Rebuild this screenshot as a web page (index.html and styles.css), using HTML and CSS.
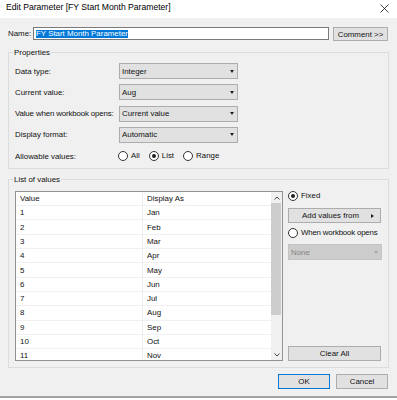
FILE: index.html
```html
<!DOCTYPE html>
<html lang="en">
<head>
  <meta charset="UTF-8">
  <title>Edit Parameter</title>
  <link rel="stylesheet" href="styles.css">
</head>
<body>
  <div class="dialog">
    <div class="titlebar">
      <span class="title">Edit Parameter [FY Start Month Parameter]</span>
      <svg class="close" viewBox="0 0 9 9"><path d="M0.5 0.5L8.5 8.5M8.5 0.5L0.5 8.5" stroke="#111" stroke-width="0.8" fill="none"/></svg>
    </div>

    <div class="namerow">
      <label class="namelabel">Name:</label>
      <div class="textbox"><span class="sel">FY Start Month Parameter</span></div>
      <button class="btn comment">Comment &gt;&gt;</button>
    </div>

    <fieldset class="group">
      <legend>Properties</legend>
      <div class="propgrid">
        <span class="plabel">Data type:</span>
        <div class="combo"><span>Integer</span><i class="arrow"></i></div>
        <span class="plabel">Current value:</span>
        <div class="combo"><span>Aug</span><i class="arrow"></i></div>
        <span class="plabel tight">Value when workbook opens:</span>
        <div class="combo"><span>Current value</span><i class="arrow"></i></div>
        <span class="plabel">Display format:</span>
        <div class="combo"><span>Automatic</span><i class="arrow"></i></div>
        <span class="plabel">Allowable values:</span>
        <div class="radios">
          <span class="opt"><i class="radio"></i>All</span>
          <span class="opt"><i class="radio on"></i>List</span>
          <span class="opt"><i class="radio"></i>Range</span>
        </div>
      </div>
    </fieldset>

    <fieldset class="group values">
      <legend>List of values</legend>
      <div class="valuesbody">
        <div class="list">
          <div class="rows">
            <div class="row"><span>Value</span><span>Display As</span></div>
            <div class="row"><span>1</span><span>Jan</span></div>
            <div class="row"><span>2</span><span>Feb</span></div>
            <div class="row"><span>3</span><span>Mar</span></div>
            <div class="row"><span>4</span><span>Apr</span></div>
            <div class="row"><span>5</span><span>May</span></div>
            <div class="row"><span>6</span><span>Jun</span></div>
            <div class="row"><span>7</span><span>Jul</span></div>
            <div class="row"><span>8</span><span>Aug</span></div>
            <div class="row"><span>9</span><span>Sep</span></div>
            <div class="row"><span>10</span><span>Oct</span></div>
            <div class="row"><span>11</span><span>Nov</span></div>
          </div>
          <div class="scrollbar">
            <div class="sbbtn"><svg viewBox="0 0 6 4"><path d="M0.5 3.5L3 1L5.5 3.5" stroke="#333" stroke-width="0.9" fill="none"/></svg></div>
            <div class="thumb"></div>
            <div class="track"></div>
            <div class="sbbtn"><svg viewBox="0 0 6 4"><path d="M0.5 0.5L3 3L5.5 0.5" stroke="#333" stroke-width="0.9" fill="none"/></svg></div>
          </div>
        </div>
        <div class="side">
          <span class="opt"><i class="radio on"></i>Fixed</span>
          <button class="btn addvalues"><span>Add values from</span><i class="rarrow"></i></button>
          <span class="opt when"><i class="radio"></i>When workbook opens</span>
          <div class="combo disabled"><span>None</span><i class="arrow"></i></div>
          <button class="btn clear">Clear All</button>
        </div>
      </div>
    </fieldset>

    <div class="footer">
      <button class="btn ok">OK</button>
      <button class="btn">Cancel</button>
    </div>
  </div>
</body>
</html>
```

FILE: styles.css
```css
body{
  margin:0;
  background:#fff;
  font-family:"Liberation Sans", Arial, sans-serif;
  font-size:7.9px;
  color:#111;
}
.dialog{
  width:397px;
  height:398px;
  box-sizing:border-box;
  background:#f0f0f0;
  border-bottom:2px solid #a3a3a3;
  overflow:hidden;
}
/* 标题栏 */
.titlebar{
  height:18px;
  background:#fff;
  display:flex;
  align-items:flex-start;
  justify-content:space-between;
  padding:0 8px 0 6px;
  box-sizing:border-box;
}
.title{
  font-size:8.6px;
  line-height:10px;
  margin-top:2px;
  color:#000;
}
.close{
  width:9px;
  height:9px;
  margin-top:3.5px;
}
/* 名称 */
.namerow{
  display:flex;
  align-items:flex-start;
  margin-top:9px;
  padding:0 8px;
  height:14px;
}
.namelabel{
  width:25px;
  line-height:13px;
}
.textbox{
  width:296px;
  height:13px;
  box-sizing:border-box;
  border:1px solid #7a7a7a;
  background:#fff;
  padding-left:2px;
  display:flex;
  align-items:center;
}
.sel{
  background:#0078d7;
  color:#fff;
  line-height:8px;
  margin-top:1px;
}
.btn{
  font-family:"Liberation Sans", Arial, sans-serif;
  font-size:7.9px;
  color:#111;
  background:#e1e1e1;
  border:1px solid #adadad;
  padding:0;
  margin:0;
  height:15px;
  box-sizing:border-box;
}
.comment{
  width:55px;
  height:14px;
  margin-left:4px;
}
/* 分组框 */
.group{
  margin:6px 8px 0;
  padding:5px 6px 4px;
  border:1px solid #dcdcdc;
  min-width:0;
}
.group legend{
  line-height:11px;
  padding:0 1px;
  margin-left:-2px;
}
.values{
  margin-top:5px;
  padding:6px 7px 6px 6px;
}
.propgrid{
  display:grid;
  grid-template-columns:104px 119px;
  grid-auto-rows:16px;
  row-gap:5.3px;
  align-items:center;
}
.tight{
  letter-spacing:-0.15px;
}
.combo{
  height:16px;
  box-sizing:border-box;
  background:#e1e1e1;
  border:1px solid #adadad;
  display:flex;
  align-items:center;
  justify-content:space-between;
  padding:0 3px 0 2px;
}
.arrow{
  width:0;
  height:0;
  border-left:2.5px solid transparent;
  border-right:2.5px solid transparent;
  border-top:3px solid #222;
}
.radios{
  display:flex;
  gap:9px;
  margin-left:-1px;
}
.opt{
  display:inline-flex;
  align-items:center;
  line-height:10px;
  white-space:nowrap;
}
.radio{
  flex:none;
  width:10px;
  height:10px;
  box-sizing:border-box;
  border:1px solid #333;
  border-radius:50%;
  background:#fff;
  margin-right:3px;
  display:inline-flex;
  align-items:center;
  justify-content:center;
}
.radio.on::after{
  content:"";
  width:4px;
  height:4px;
  border-radius:50%;
  background:#222;
}
/* 列表 */
.valuesbody{
  display:flex;
  gap:5px;
  height:170px;
}
.list{
  width:268px;
  height:170px;
  box-sizing:border-box;
  border:1px solid #929292;
  display:flex;
}
.rows{
  flex:1;
  overflow:hidden;
  background:#fff;
}
.row{
  display:flex;
  height:14.3px;
  box-sizing:border-box;
  border-bottom:1px solid #f0f0f0;
}
.row:first-child{
  height:14px;
}
.row span{
  display:flex;
  align-items:center;
  padding-left:4px;
  box-sizing:border-box;
}
.row span:first-child{
  width:127px;
  border-right:1px solid #ececec;
}
.scrollbar{
  width:11px;
  background:#f0f0f0;
  display:flex;
  flex-direction:column;
}
.sbbtn{
  height:11px;
  display:flex;
  align-items:center;
  justify-content:center;
}
.sbbtn svg{
  width:6px;
  height:4px;
}
.thumb{
  height:112px;
  background:#cdcdcd;
  margin-right:1px;
}
.track{
  flex:1;
}
.side{
  width:93px;
  display:flex;
  flex-direction:column;
}
.addvalues{
  margin-top:7px;
  display:flex;
  align-items:center;
  justify-content:space-between;
  padding:0 6px 0 13px;
}
.rarrow{
  width:0;
  height:0;
  border-top:2.5px solid transparent;
  border-bottom:2.5px solid transparent;
  border-left:3px solid #222;
}
.when{
  margin-top:5px;
  letter-spacing:-0.2px;
}
.combo.disabled{
  margin-top:6px;
  width:94px;
  background:#cccccc;
  border-color:#c4c4c4;
  color:#858585;
}
.combo.disabled .arrow{
  border-top-color:#a5a5a5;
}
.clear{
  margin-top:auto;
}
/* 底部按钮 */
.footer{
  display:flex;
  justify-content:flex-end;
  gap:6px;
  margin-top:6px;
  padding-right:9px;
}
.footer .btn{
  width:52px;
}
.ok{
  border-color:#0078d7;
}
```
